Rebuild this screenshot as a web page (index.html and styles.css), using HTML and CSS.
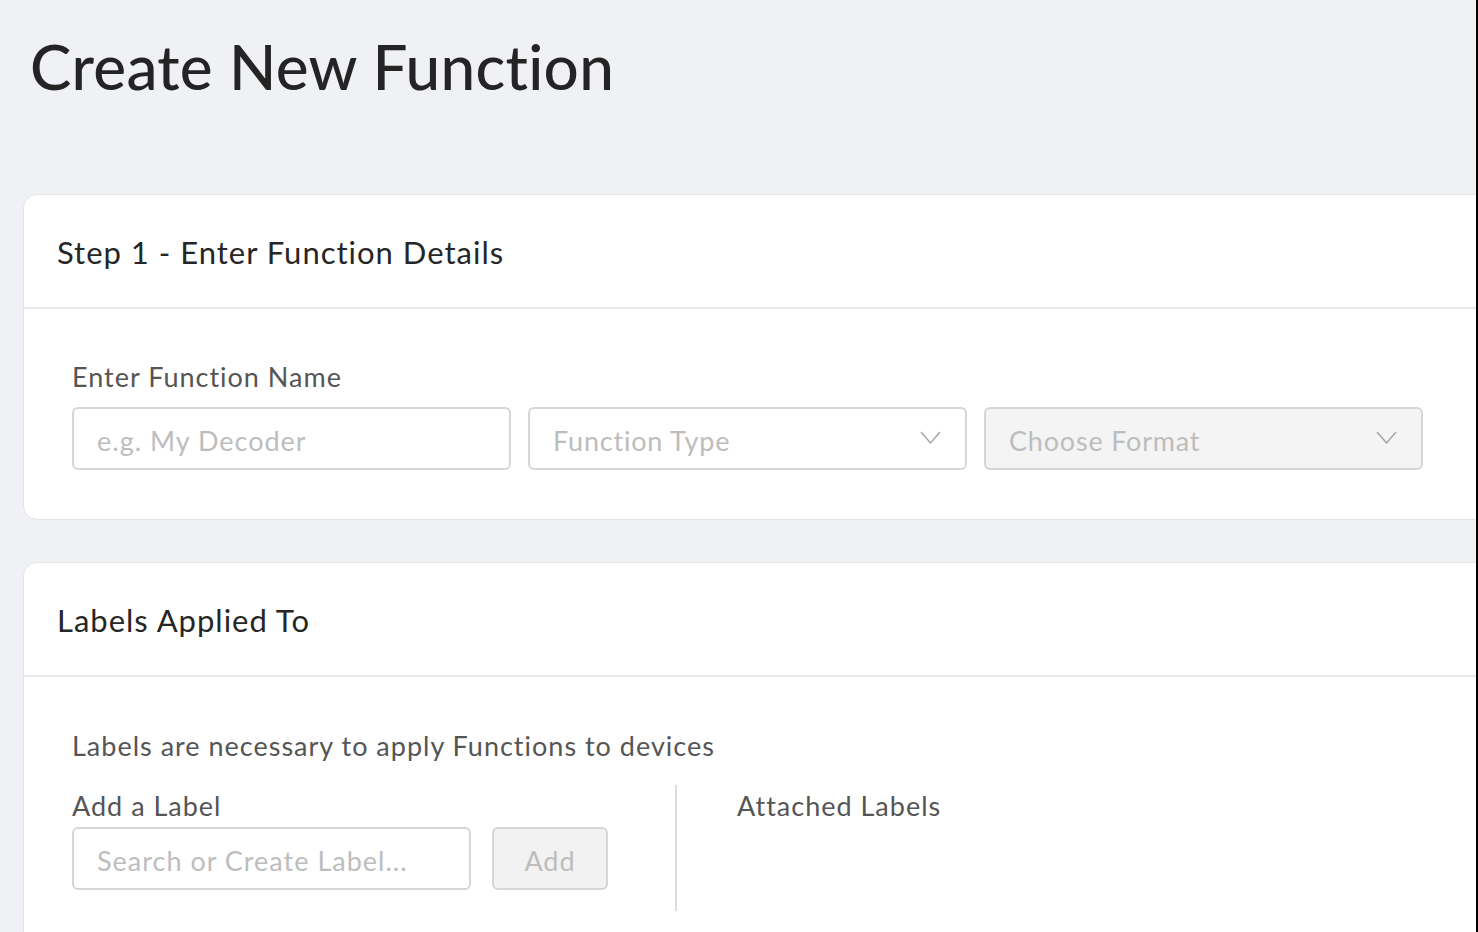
FILE: index.html
```html
<!DOCTYPE html>
<html>
<head>
<meta charset="utf-8">
<link rel="stylesheet" href="styles.css">
</head>
<body>
<div class="page">
  <h1 class="title">Create New Function</h1>

  <section class="card">
    <div class="card-head">Step 1 - Enter Function Details</div>
    <div class="card-body body-one">
      <div class="field-label">Enter Function Name</div>
      <div class="row">
        <div class="control">e.g. My Decoder</div>
        <div class="control select">Function Type
          <svg class="chev" width="21" height="13" viewBox="0 0 21 13"><path d="M1 1 L10.5 12 L20 1" fill="none" stroke="#a0a0a0" stroke-width="1.3"/></svg>
        </div>
        <div class="control select disabled">Choose Format
          <svg class="chev" width="21" height="13" viewBox="0 0 21 13"><path d="M1 1 L10.5 12 L20 1" fill="none" stroke="#a0a0a0" stroke-width="1.3"/></svg>
        </div>
      </div>
    </div>
  </section>

  <section class="card card-two">
    <div class="card-head">Labels Applied To</div>
    <div class="card-body body-two">
      <div class="note">Labels are necessary to apply Functions to devices</div>
      <div class="labels">
        <div class="add-col">
          <div class="field-label">Add a Label</div>
          <div class="add-row">
            <div class="control label-input">Search or Create Label...</div>
            <div class="add-btn">Add</div>
          </div>
        </div>
        <div class="divider"></div>
        <div class="attached">
          <div class="field-label">Attached Labels</div>
        </div>
      </div>
    </div>
  </section>
</div>
</body>
</html>
```

FILE: styles.css
```css
html, body {
  margin: 0;
  padding: 0;
  background: #f0f1f5;
}
body {
  font-family: "Lato", "Open Sans", sans-serif;
  overflow: hidden;
}
.page {
  width: 1453px;
  height: 932px;
  border-right: 2px solid #000;
  overflow: hidden;
  padding-left: 23px;
}
.title {
  margin: 0;
  padding: 28px 0 0 7px;
  height: 194px;
  box-sizing: border-box;
  font-size: 62px;
  line-height: 76px;
  font-weight: 500;
  color: #242424;
  letter-spacing: 0.3px;
}
.card {
  width: 1520px;
  background: #fff;
  border: 1px solid #e4e4e6;
  border-radius: 14px;
}
.card-two {
  margin-top: 42px;
}
.card-head {
  height: 114px;
  box-sizing: border-box;
  padding: 37px 0 0 33px;
  font-size: 31px;
  line-height: 40px;
  letter-spacing: 1px;
  color: #262626;
  border-bottom: 2px solid #e8e8ea;
}
.card-body {
  padding-left: 48px;
}
.body-one {
  padding-top: 50px;
  padding-bottom: 49px;
}
.field-label,
.note {
  font-size: 27px;
  line-height: 36px;
  letter-spacing: 1px;
  color: #555;
}
.row {
  display: flex;
  gap: 17px;
  margin-top: 12px;
}
.control {
  width: 439px;
  height: 63px;
  box-sizing: border-box;
  border: 2px solid #d6d6d6;
  border-radius: 6px;
  padding: 3px 0 0 23px;
  font-size: 27px;
  letter-spacing: 1px;
  color: #bdbdbd;
  display: flex;
  align-items: center;
}
.select {
  justify-content: space-between;
  padding-right: 24px;
  letter-spacing: 0.8px;
}
.disabled {
  background: #f4f4f4;
}
.chev {
  display: block;
  margin-top: -5px;
}
.body-two {
  padding-top: 51px;
  padding-bottom: 80px;
}
.labels {
  display: flex;
  margin-top: 21px;
}
.add-col {
  padding-top: 3px;
}
.add-row {
  display: flex;
  gap: 21px;
  margin-top: 3px;
}
.label-input {
  width: 399px;
}
.add-btn {
  width: 116px;
  height: 63px;
  box-sizing: border-box;
  border: 2px solid #d6d6d6;
  border-radius: 6px;
  background: #f2f2f2;
  color: #bdbdbd;
  font-size: 27px;
  letter-spacing: 1px;
  padding-top: 3px;
  display: flex;
  align-items: center;
  justify-content: center;
}
.divider {
  width: 2px;
  height: 126px;
  background: #dcdcdc;
  margin-left: 67px;
}
.attached {
  padding-left: 60px;
  padding-top: 3px;
}
```
